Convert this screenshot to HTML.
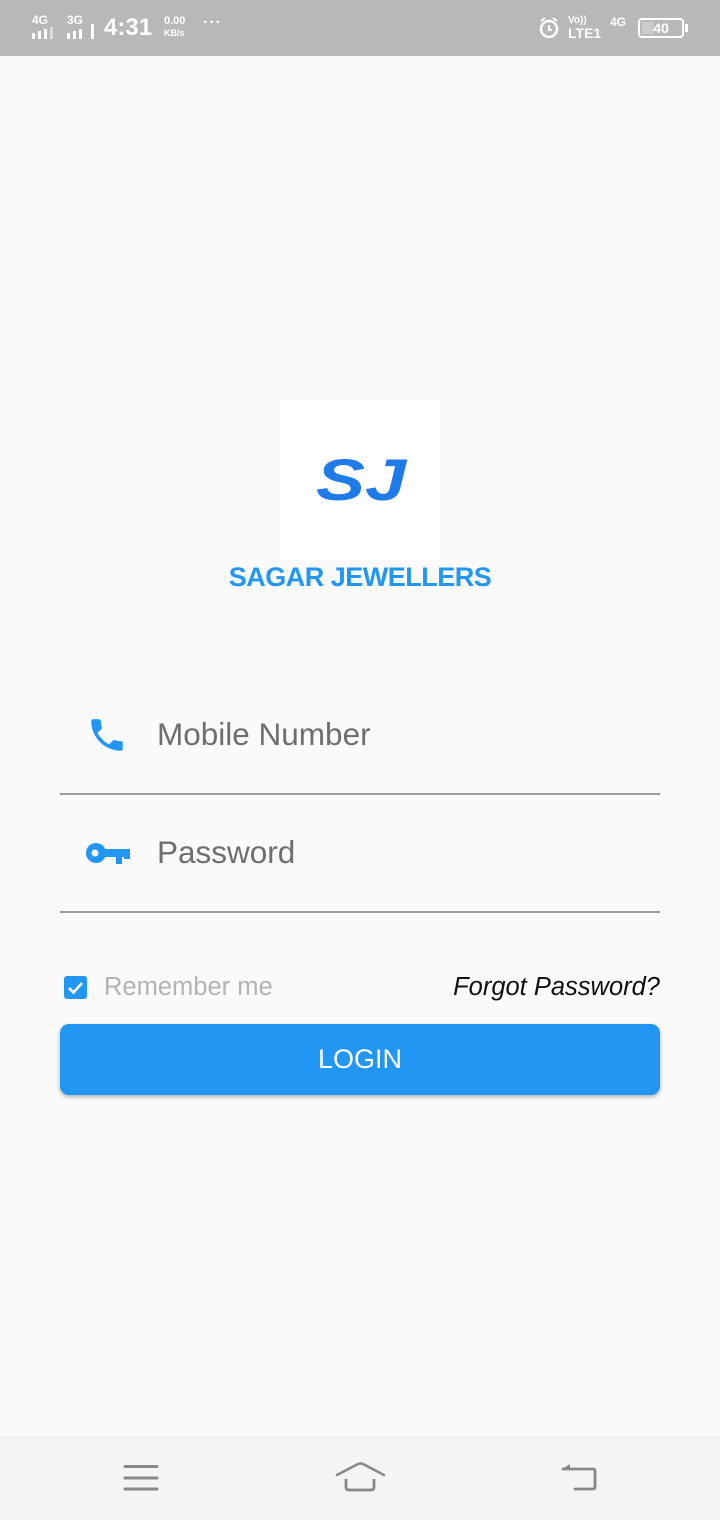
<!DOCTYPE html>
<html><head><meta charset="utf-8"><style>
*{margin:0;padding:0;box-sizing:border-box}
body{width:720px;height:1520px;background:#fafafa;font-family:"Liberation Sans",Roboto,sans-serif;position:relative;overflow:hidden}
.abs{position:absolute}
.sb{top:0;left:0;width:720px;height:56px;background:#b8b8b8;color:#fff;font-weight:bold}
.nav{top:1436px;left:0;width:720px;height:84px;background:#f4f4f4}
</style></head><body>
<div class="abs sb">
 <div class="abs" style="left:32px;top:13px;font-size:12px">4G</div>
 <svg class="abs" style="left:32px;top:26px" width="28" height="13"><rect x="0" y="7" width="3" height="6" fill="#fff"/><rect x="6" y="5" width="3" height="8" fill="#fff"/><rect x="12" y="3" width="3" height="10" fill="#fff"/><rect x="18" y="1" width="3" height="12" fill="#ddd"/></svg>
 <div class="abs" style="left:67px;top:13px;font-size:12px">3G</div>
 <svg class="abs" style="left:67px;top:24px" width="30" height="15"><rect x="0" y="9" width="3" height="6" fill="#fff"/><rect x="6" y="7" width="3" height="8" fill="#fff"/><rect x="12" y="5" width="3" height="10" fill="#fff"/><rect x="24" y="0" width="3" height="15" fill="#fff"/></svg>
 <div class="abs" style="left:104px;top:14px;font-size:24px">4:31</div>
 <div class="abs" style="left:164px;top:15px;font-size:11px;line-height:12px">0.00<br><span style="font-size:9px">KB/s</span></div>
 <div class="abs" style="left:203px;top:14px;font-size:16px;letter-spacing:1px">···</div>
 <svg class="abs" style="left:538px;top:16px" width="24" height="24"><circle cx="11" cy="13" r="8" fill="none" stroke="#fff" stroke-width="2.5"/><path d="M11 9v5h3" stroke="#fff" stroke-width="2" fill="none"/><path d="M3 5l4-3M19 5l-4-3" stroke="#fff" stroke-width="2"/></svg>
 <div class="abs" style="left:568px;top:15px;font-size:10px;line-height:12px">Vo))<br><span style="font-size:14px">LTE1</span></div>
 <div class="abs" style="left:610px;top:15px;font-size:12px">4G</div>
 <div class="abs" style="left:638px;top:18px;width:46px;height:20px;border:2px solid #fff;border-radius:4px;font-size:14px;text-align:center;line-height:16px"><div class="abs" style="left:2px;top:2px;width:12px;height:12px;background:#ccc"></div><span style="position:relative">40</span></div>
 <div class="abs" style="left:685px;top:24px;width:3px;height:8px;background:#fff"></div>
</div>

<div class="abs" style="left:280px;top:400px;width:160px;height:160px;background:#fff"></div>
<svg class="abs" style="left:314px;top:450px" width="96" height="56"><text x="2" y="50" font-family="Liberation Sans" font-weight="bold" font-style="italic" font-size="58" fill="#1e7be8" textLength="90" lengthAdjust="spacingAndGlyphs">SJ</text></svg>
<div class="abs" style="left:0;width:720px;top:562px;text-align:center;font-size:27px;font-weight:bold;color:#2196f3;letter-spacing:-0.5px">SAGAR JEWELLERS</div>

<svg class="abs" style="left:86px;top:714px" width="42" height="42" viewBox="0 0 24 24"><path fill="#2196f3" d="M6.62 10.79c1.44 2.830 3.76 5.14 6.59 6.59l2.2-2.2c.27-.27.67-.36 1.020-.24 1.12.37 2.33.57 3.57.57.55 0 1 .45 1 1V20c0 .55-.45 1-1 1-9.39 0-17-7.61-17-17 0-.55.45-1 1-1h3.5c.55 0 1 .45 1 1 0 1.25.2 2.45.57 3.57.11.35.03.74-.25 1.020l-2.2 2.2z"/></svg>
<div class="abs" style="left:157px;top:716px;font-size:31.5px;color:#6e6e6e">Mobile Number</div>
<div class="abs" style="left:60px;top:793px;width:600px;height:2px;background:#9e9e9e"></div>

<svg class="abs" style="left:86px;top:840px" width="44" height="26"><circle cx="10" cy="13" r="10" fill="#2196f3"/><circle cx="9" cy="13" r="3.5" fill="#fafafa"/><rect x="16" y="9" width="28" height="8" fill="#2196f3"/><rect x="30" y="12" width="6" height="12" fill="#2196f3"/><rect x="38" y="12" width="6" height="7" fill="#2196f3"/></svg>
<div class="abs" style="left:157px;top:834px;font-size:31.5px;color:#6e6e6e">Password</div>
<div class="abs" style="left:60px;top:911px;width:600px;height:2px;background:#9e9e9e"></div>

<svg class="abs" style="left:64px;top:976px" width="23" height="23"><rect width="23" height="23" rx="3" fill="#2196f3"/><path d="M5 12l4.5 4.5L18 7" stroke="#fff" stroke-width="2.6" fill="none"/></svg>
<div class="abs" style="left:104px;top:973px;font-size:25.5px;color:#b3b3b3">Remember me</div>
<div class="abs" style="right:60px;top:973px;font-size:25.5px;font-style:italic;color:#111">Forgot Password?</div>

<div class="abs" style="left:60px;top:1024px;width:600px;height:71px;background:#2196f3;border-radius:9px;box-shadow:0 2px 4px rgba(0,0,0,.3);color:#fff;font-size:27px;text-align:center;line-height:71px">LOGIN</div>

<div class="abs nav">
 <svg class="abs" style="left:120px;top:24px" width="40" height="40"><path d="M5 6.5h32M5 18h32M5 29h32" stroke="#888" stroke-width="3" stroke-linecap="round"/></svg>
 <svg class="abs" style="left:335px;top:24px" width="52" height="40"><path d="M2 15L22 4.5Q25.5 2.5 29 4.5L49 15" stroke="#888" stroke-width="2.5" fill="none" stroke-linecap="round"/><path d="M11 19v8q0 3 3 3h22q3 0 3-3v-8" stroke="#888" stroke-width="2.8" fill="none"/></svg>
 <svg class="abs" style="left:560px;top:24px" width="40" height="40"><path d="M3 9h30q2 0 2 2v16q0 2-2 2H15" stroke="#888" stroke-width="2.8" fill="none" stroke-linecap="round"/><path d="M2 9l8-5v5z" fill="#888"/></svg>
</div>
</body></html>
